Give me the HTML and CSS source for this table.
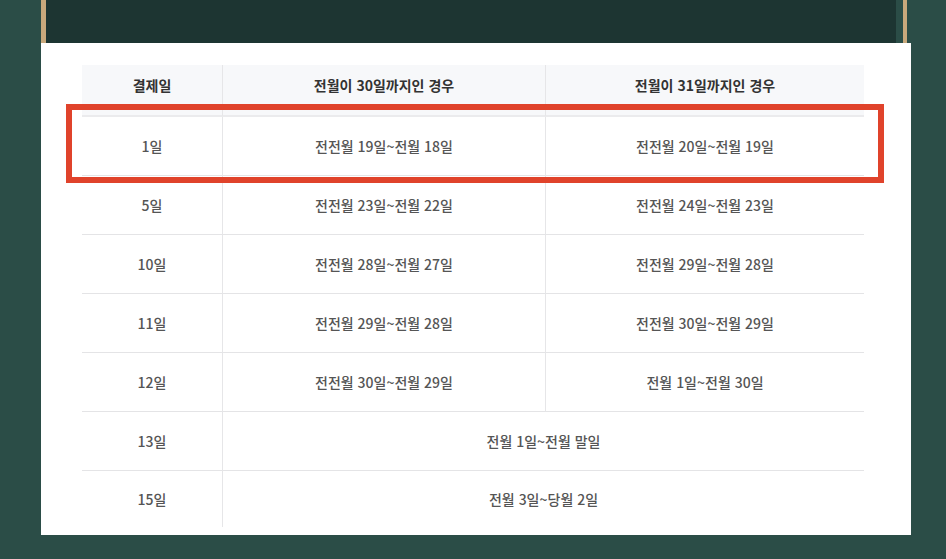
FILE: index.html
```html
<!DOCTYPE html>
<html lang="ko">
<head>
<meta charset="utf-8">
<link rel="stylesheet" href="styles.css">
</head>
<body>
<div class="frame"></div>
<div class="card">
  <div class="grid">
    <div class="cell head c1">결제일</div>
    <div class="cell head c2">전월이 30일까지인 경우</div>
    <div class="cell head">전월이 31일까지인 경우</div>

    <div class="cell c1">1일</div>
    <div class="cell c2">전전월 19일~전월 18일</div>
    <div class="cell">전전월 20일~전월 19일</div>

    <div class="cell c1">5일</div>
    <div class="cell c2">전전월 23일~전월 22일</div>
    <div class="cell">전전월 24일~전월 23일</div>

    <div class="cell c1">10일</div>
    <div class="cell c2">전전월 28일~전월 27일</div>
    <div class="cell">전전월 29일~전월 28일</div>

    <div class="cell c1">11일</div>
    <div class="cell c2">전전월 29일~전월 28일</div>
    <div class="cell">전전월 30일~전월 29일</div>

    <div class="cell c1">12일</div>
    <div class="cell c2">전전월 30일~전월 29일</div>
    <div class="cell">전월 1일~전월 30일</div>

    <div class="cell c1">13일</div>
    <div class="cell span">전월 1일~전월 말일</div>

    <div class="cell c1 last">15일</div>
    <div class="cell span last">전월 3일~당월 2일</div>
  </div>
  <div class="highlight"></div>
</div>
</body>
</html>
```
FILE: styles.css
```css
html, body {
  margin: 0;
  padding: 0;
}
body {
  background: #2b4d47;
  width: 946px;
  height: 559px;
  overflow: hidden;
  font-family: "Noto Sans CJK KR", "Noto Sans", sans-serif;
}
.frame {
  margin-left: 41px;
  width: 857px;
  height: 43px;
  border-left: 5px solid #c9a97c;
  border-right: 4px solid #c9a97c;
  background: linear-gradient(to right, #1d3532 calc(100% - 7px), #2b4d47 0);
}
.card {
  position: relative;
  margin-left: 41px;
  width: 870px;
  height: 492px;
  box-sizing: border-box;
  padding: 22px 0 0 41px;
  background: #ffffff;
}
.grid {
  display: grid;
  width: 782px;
  grid-template-columns: 141px 323px 318px;
  grid-template-rows: 52px repeat(6, 59px) 56px;
}
.cell {
  display: flex;
  align-items: center;
  justify-content: center;
  box-sizing: border-box;
  border-bottom: 1px solid #e4e4e6;
  font-size: 14px;
  font-weight: 500;
  color: #555;
  letter-spacing: 0;
}
.cell.head {
  background: #f7f8fa;
  font-weight: 700;
  color: #333;
  padding-bottom: 10px;
  border-bottom: 2px solid #ebebed;
}
.c1, .c2 {
  border-right: 1px solid #e6e6e8;
}
.span {
  grid-column: span 2;
}
.last {
  border-bottom: none;
}
.highlight {
  position: absolute;
  left: 25px;
  top: 61px;
  width: 818px;
  height: 79px;
  box-sizing: border-box;
  border: 6px solid #e0432b;
}
```
